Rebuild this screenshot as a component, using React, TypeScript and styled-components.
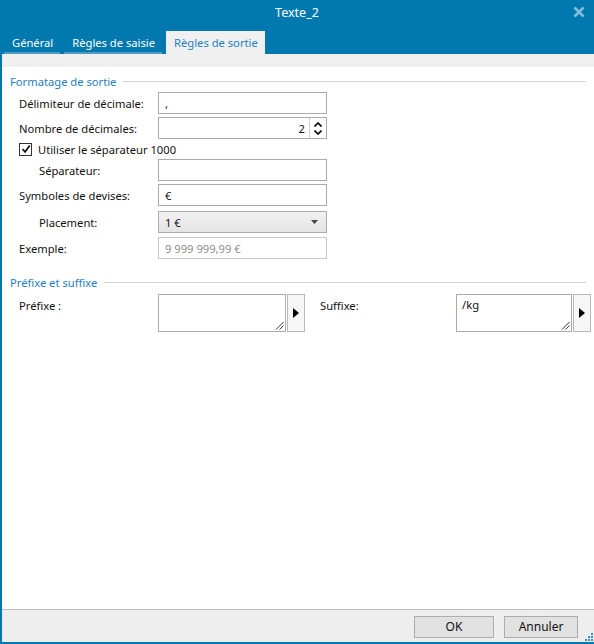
import styled, { createGlobalStyle } from "styled-components";

const BLUE = "#0279ae";
const HEAD_BLUE = "#1f80bd";

const Global = createGlobalStyle`
    html, body {
        margin: 0;
        padding: 0;
        background: #fff;
    }
    body {
        font-family: "Segoe UI", "Noto Sans", "Liberation Sans", sans-serif;
        font-size: 11.2px;
        color: #111;
    }
`

const Window = styled.div`
    width: 594px;
    height: 644px;
    display: flex;
    flex-direction: column;
    box-sizing: border-box;
    border-left: 2px solid ${BLUE};
    border-bottom: 2px solid ${BLUE};
    background: #fff;
`

const TitleBar = styled.div`
    height: 31px;
    background: ${BLUE};
    margin-left: -2px;
    position: relative;
    display: flex;
    align-items: center;
    justify-content: center;
    color: #fff;
    font-size: 12.5px;
    padding-bottom: 6px;
    box-sizing: border-box;
`

const CloseBtn = styled.div`
    position: absolute;
    right: 9px;
    top: 6px;
    width: 12px;
    height: 12px;
    display: flex;
`

const TabStrip = styled.div`
    height: 23px;
    background: ${BLUE};
    margin-left: -2px;
    display: flex;
    align-items: flex-end;
    padding-left: 4px;
    gap: 4px;
`

const Tab = styled.div<{ $active?: boolean }>`
    height: 23px;
    box-sizing: border-box;
    padding: 0 7px 0 8px;
    display: flex;
    align-items: center;
    color: ${p => p.$active ? HEAD_BLUE : "#fff"};
    background: ${p => p.$active ? "#f0f0f0" : "transparent"};
    border-bottom: ${p => p.$active ? "none" : "2px solid #4f9bc4"};
    padding-top: ${p => p.$active ? "0" : "2px"};
`

const GrayBand = styled.div`
    height: 13px;
    background: #f0f0f0;
`

const Content = styled.div`
    flex: 1;
    padding: 6px 8px 0 8px;
`

const SectionHead = styled.div<{ $space?: number }>`
    display: flex;
    align-items: center;
    gap: 7px;
    color: ${HEAD_BLUE};
    height: 16px;
    margin-top: ${p => p.$space ?? 0}px;
    &::after {
        content: "";
        flex: 1;
        height: 1px;
        background: #d5d5d5;
    }
`

const Form = styled.div`
    display: flex;
    flex-direction: column;
    gap: 3px;
    padding: 3px 0 0 9px;
`

const Row = styled.div<{ $indent?: boolean; $extra?: number }>`
    display: flex;
    align-items: center;
    height: 22px;
    margin-top: ${p => p.$extra ?? 0}px;
    & > label {
        width: ${p => p.$indent ? "119px" : "139px"};
        padding-left: ${p => p.$indent ? "20px" : "0"};
    }
`

const Field = styled.div<{ $disabled?: boolean }>`
    width: 169px;
    height: 22px;
    box-sizing: border-box;
    border: 1px solid ${p => p.$disabled ? "#c8c8c8" : "#ababab"};
    background: #fff;
    display: flex;
    align-items: center;
    padding: 0 6px;
    color: ${p => p.$disabled ? "#8d8d8d" : "#111"};
`

const SpinField = styled(Field)`
    padding: 0;
    & > span {
        flex: 1;
        text-align: right;
        padding-right: 4px;
    }
`

const Spinner = styled.div`
    width: 16px;
    height: 100%;
    border-left: 1px solid #d0d0d0;
    display: flex;
    flex-direction: column;
    align-items: center;
    justify-content: center;
    gap: 3px;
`

const SelectBox = styled(Field)`
    background: linear-gradient(#f1f1f1, #e4e4e4);
    border-color: #acacac;
    justify-content: space-between;
    padding: 0 8px 0 6px;
`

const CheckRow = styled.div`
    display: flex;
    align-items: center;
    gap: 6px;
    height: 14px;
`

const Box = styled.div`
    width: 13px;
    height: 13px;
    box-sizing: border-box;
    border: 1px solid #333;
    background: #fff;
    display: flex;
    align-items: center;
    justify-content: center;
`

const AffixRow = styled.div`
    display: flex;
    padding: 4px 0 0 9px;
`

const AffixGroup = styled.div<{ $labelWidth: number; $areaWidth: number; $gap?: number }>`
    display: flex;
    align-items: flex-start;
    margin-left: ${p => p.$gap ?? 0}px;
    & > label {
        width: ${p => p.$labelWidth}px;
        padding-top: 4px;
    }
    & > div:nth-of-type(1) {
        width: ${p => p.$areaWidth}px;
    }
`

const TextArea = styled.div`
    height: 38px;
    box-sizing: border-box;
    border: 1px solid #ababab;
    background: #fff;
    position: relative;
    padding: 2px 5px;
`

const Grip = styled.svg`
    position: absolute;
    right: 1px;
    bottom: 1px;
`

const ArrowBtn = styled.div`
    width: 18px;
    height: 38px;
    box-sizing: border-box;
    margin-left: 1px;
    border: 1px solid #b8b8b8;
    background: #f6f6f6;
    display: flex;
    align-items: center;
    justify-content: center;
`

const Footer = styled.div`
    height: 32px;
    border-top: 1px solid #bdbdbd;
    background: #eeeeee;
    display: flex;
    align-items: center;
    justify-content: flex-end;
    gap: 10px;
    padding-right: 16px;
    position: relative;
`

const Button = styled.button<{ $w: number }>`
    width: ${p => p.$w}px;
    height: 22px;
    border: 1px solid #adadad;
    background: #e1e1e1;
    font-family: inherit;
    font-size: 12px;
    color: #111;
    padding: 0;
    margin-top: 1px;
`

const Dots = styled.svg`
    position: absolute;
    right: 1px;
    bottom: 1px;
`

function ResizeGrip() {
    return (
        <Grip width="9" height="9" viewBox="0 0 9 9">
            <line x1="1" y1="8.5" x2="8.5" y2="1" stroke="#333" strokeWidth="1" />
            <line x1="4.5" y1="8.5" x2="8.5" y2="4.5" stroke="#333" strokeWidth="1" />
        </Grip>
    )
}

function RightArrow() {
    return (
        <svg width="6" height="10" viewBox="0 0 6 10">
            <path d="M0 0 L6 5 L0 10 Z" fill="#000" />
        </svg>
    )
}

function App() {
    return (
        <Window>
            <Global />
            <TitleBar>
                Texte_2
                <CloseBtn>
                    <svg width="12" height="12" viewBox="0 0 12 12">
                        <path d="M1.5 1.5 L10.5 10.5 M10.5 1.5 L1.5 10.5" stroke="#7fbedc" strokeWidth="2.6" />
                    </svg>
                </CloseBtn>
            </TitleBar>
            <TabStrip>
                <Tab>Général</Tab>
                <Tab>Règles de saisie</Tab>
                <Tab $active>Règles de sortie</Tab>
            </TabStrip>
            <GrayBand />
            <Content>
                <SectionHead>Formatage de sortie</SectionHead>
                <Form>
                    <Row>
                        <label>Délimiteur de décimale:</label>
                        <Field>,</Field>
                    </Row>
                    <Row>
                        <label>Nombre de décimales:</label>
                        <SpinField>
                            <span>2</span>
                            <Spinner>
                                <svg width="8" height="5" viewBox="0 0 8 5">
                                    <path d="M0.5 4.5 L4 1 L7.5 4.5" stroke="#000" strokeWidth="1.6" fill="none" />
                                </svg>
                                <svg width="8" height="5" viewBox="0 0 8 5">
                                    <path d="M0.5 0.5 L4 4 L7.5 0.5" stroke="#000" strokeWidth="1.6" fill="none" />
                                </svg>
                            </Spinner>
                        </SpinField>
                    </Row>
                    <CheckRow>
                        <Box>
                            <svg width="10" height="10" viewBox="0 0 10 10">
                                <path d="M1.5 5 L4 7.8 L8.8 1.5" stroke="#111" strokeWidth="1.7" fill="none" />
                            </svg>
                        </Box>
                        Utiliser le séparateur 1000
                    </CheckRow>
                    <Row $indent>
                        <label>Séparateur:</label>
                        <Field />
                    </Row>
                    <Row>
                        <label>Symboles de devises:</label>
                        <Field>€</Field>
                    </Row>
                    <Row $indent $extra={2}>
                        <label>Placement:</label>
                        <SelectBox>
                            <span>1 €</span>
                            <svg width="7" height="4" viewBox="0 0 7 4">
                                <path d="M0 0 L7 0 L3.5 4 Z" fill="#444" />
                            </svg>
                        </SelectBox>
                    </Row>
                    <Row $extra={1}>
                        <label>Exemple:</label>
                        <Field $disabled>9 999 999,99 €</Field>
                    </Row>
                </Form>
                <SectionHead $space={15}>Préfixe et suffixe</SectionHead>
                <AffixRow>
                    <AffixGroup $labelWidth={139} $areaWidth={128}>
                        <label>Préfixe :</label>
                        <TextArea><ResizeGrip /></TextArea>
                        <ArrowBtn><RightArrow /></ArrowBtn>
                    </AffixGroup>
                    <AffixGroup $labelWidth={136} $areaWidth={116} $gap={15}>
                        <label>Suffixe:</label>
                        <TextArea>/kg<ResizeGrip /></TextArea>
                        <ArrowBtn><RightArrow /></ArrowBtn>
                    </AffixGroup>
                </AffixRow>
            </Content>
            <Footer>
                <Button $w={80}>OK</Button>
                <Button $w={74}>Annuler</Button>
                <Dots width="9" height="9" viewBox="0 0 9 9">
                    <rect x="7" y="1" width="2" height="2" fill="#3a8fc4" />
                    <rect x="4" y="4" width="2" height="2" fill="#3a8fc4" />
                    <rect x="7" y="4" width="2" height="2" fill="#3a8fc4" />
                    <rect x="1" y="7" width="2" height="2" fill="#3a8fc4" />
                    <rect x="4" y="7" width="2" height="2" fill="#3a8fc4" />
                    <rect x="7" y="7" width="2" height="2" fill="#3a8fc4" />
                </Dots>
            </Footer>
        </Window>
    );
}

export default App;
